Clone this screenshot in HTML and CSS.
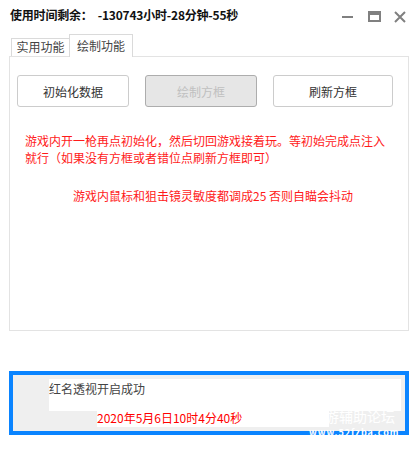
FILE: index.html
```html
<!DOCTYPE html>
<html lang="zh-CN">
<head>
<meta charset="utf-8">
<title>绘制功能</title>
<link rel="stylesheet" href="styles.css">
</head>
<body>
<div class="window">
  <div class="titlebar">
    <span class="title">使用时间剩余：&nbsp;&nbsp;-130743小时-28分钟-55秒</span>
    <div class="controls">
      <svg class="ctl" width="14" height="12" viewBox="0 0 14 12"><rect x="0" y="5" width="11" height="2" fill="#808080"/></svg>
      <svg class="ctl" width="14" height="12" viewBox="0 0 14 12"><rect x="1" y="1" width="11" height="9" fill="none" stroke="#808080" stroke-width="2"/><rect x="1" y="1" width="11" height="3" fill="#808080"/></svg>
      <svg class="ctl" width="14" height="12" viewBox="0 0 14 12"><path d="M1 1 L11 11 M11 1 L1 11" stroke="#808080" stroke-width="2"/></svg>
    </div>
  </div>
  <div class="tabs">
    <div class="tab">实用功能</div>
    <div class="tab active">绘制功能</div>
  </div>
  <div class="panel">
    <div class="buttons">
      <button class="btn w112">初始化数据</button>
      <button class="btn w112" disabled>绘制方框</button>
      <button class="btn w120">刷新方框</button>
    </div>
    <p class="note">游戏内开一枪再点初始化，然后切回游戏接着玩。等初始完成点注入就行（如果没有方框或者错位点刷新方框即可）</p>
    <p class="note second">游戏内鼠标和狙击镜灵敏度都调成25 否则自瞄会抖动</p>
  </div>
  <div class="status">
    <div class="msg">红名透视开启成功</div>
    <div class="time">2020年5月6日10时4分40秒</div>
    <div class="watermark"><span class="wm1">游辅助论坛</span><span class="wm2">www.52fzba.com</span></div>
  </div>
</div>
</body>
</html>
```

FILE: styles.css
```css
* { box-sizing: border-box; }
html, body { margin: 0; padding: 0; background: #ffffff; }
body {
  font-family: "Noto Sans CJK SC", "Noto Sans", sans-serif;
  font-size: 12px;
  color: #333333;
  width: 418px;
  height: 449px;
  overflow: hidden;
}
.window { padding: 0 9px; position: relative; }
.titlebar {
  height: 34px;
  display: flex;
  align-items: flex-start;
  padding-top: 5px;
  padding-left: 1px;
}
.title {
  font-weight: bold;
  font-size: 12px;
  line-height: 20px;
  color: #111111;
  letter-spacing: -0.2px;
}
.controls {
  margin-left: auto;
  display: flex;
  gap: 12px;
  padding-top: 6px;
  padding-right: 1px;
}
.ctl { display: block; }
.tabs {
  display: flex;
  align-items: flex-end;
  height: 22px;
  padding-left: 2px;
  position: relative;
  z-index: 2;
}
.tab {
  height: 18px;
  width: 58px;
  border: 1px solid #dadada;
  border-bottom: none;
  border-right: none;
  background: #ffffff;
  color: #444444;
  font-size: 12px;
  line-height: 16px;
  text-align: center;
}
.tab.active {
  height: 23px;
  width: 64px;
  border-right: 1px solid #dadada;
  margin-bottom: -1px;
  line-height: 21px;
  padding-bottom: 1px;
}
.panel {
  height: 275px;
  border: 1px solid #e3e3e3;
  background: #ffffff;
  position: relative;
  z-index: 1;
}
.buttons {
  display: flex;
  gap: 16px;
  margin-top: 18px;
  padding-left: 7px;
}
.btn {
  height: 32px;
  border: 1px solid #cccccc;
  border-radius: 3px;
  background: #ffffff;
  font-family: "Noto Sans CJK SC", "Noto Sans", sans-serif;
  font-size: 12px;
  color: #333333;
  padding: 0;
}
.btn:disabled { background: #e6e6e6; border-color: #adadad; color: #c0c0c0; }
.w112 { width: 112px; }
.w120 { width: 120px; }
.note {
  margin: 25px 0 0 15px;
  width: 368px;
  color: #ff1a1a;
  font-size: 12px;
  line-height: 17px;
}
.note.second { margin: 21px 0 0 63px; width: auto; }
.status {
  margin-top: 40px;
  height: 64px;
  border: 4px solid #0a84ff;
  background: #efefef;
  position: relative;
  padding-top: 4px;
}
.msg {
  margin-left: 36px;
  width: 352px;
  height: 32px;
  background: #ffffff;
  color: #444444;
  font-size: 12px;
  line-height: 16px;
  padding-top: 2px;
}
.time {
  margin-left: 84px;
  width: 232px;
  height: 16px;
  background: #ffffff;
  color: #ff0000;
  font-size: 12px;
  line-height: 14px;
}
.watermark {
  position: absolute;
  left: 312px;
  top: 34px;
  color: #ffffff;
  white-space: nowrap;
}
.wm1 { display: block; font-size: 14px; line-height: 15px; height: 19px; }
.wm2 { display: block; font-size: 9px; line-height: 10px; font-weight: bold; letter-spacing: 1px; margin-left: -16px; }
```
